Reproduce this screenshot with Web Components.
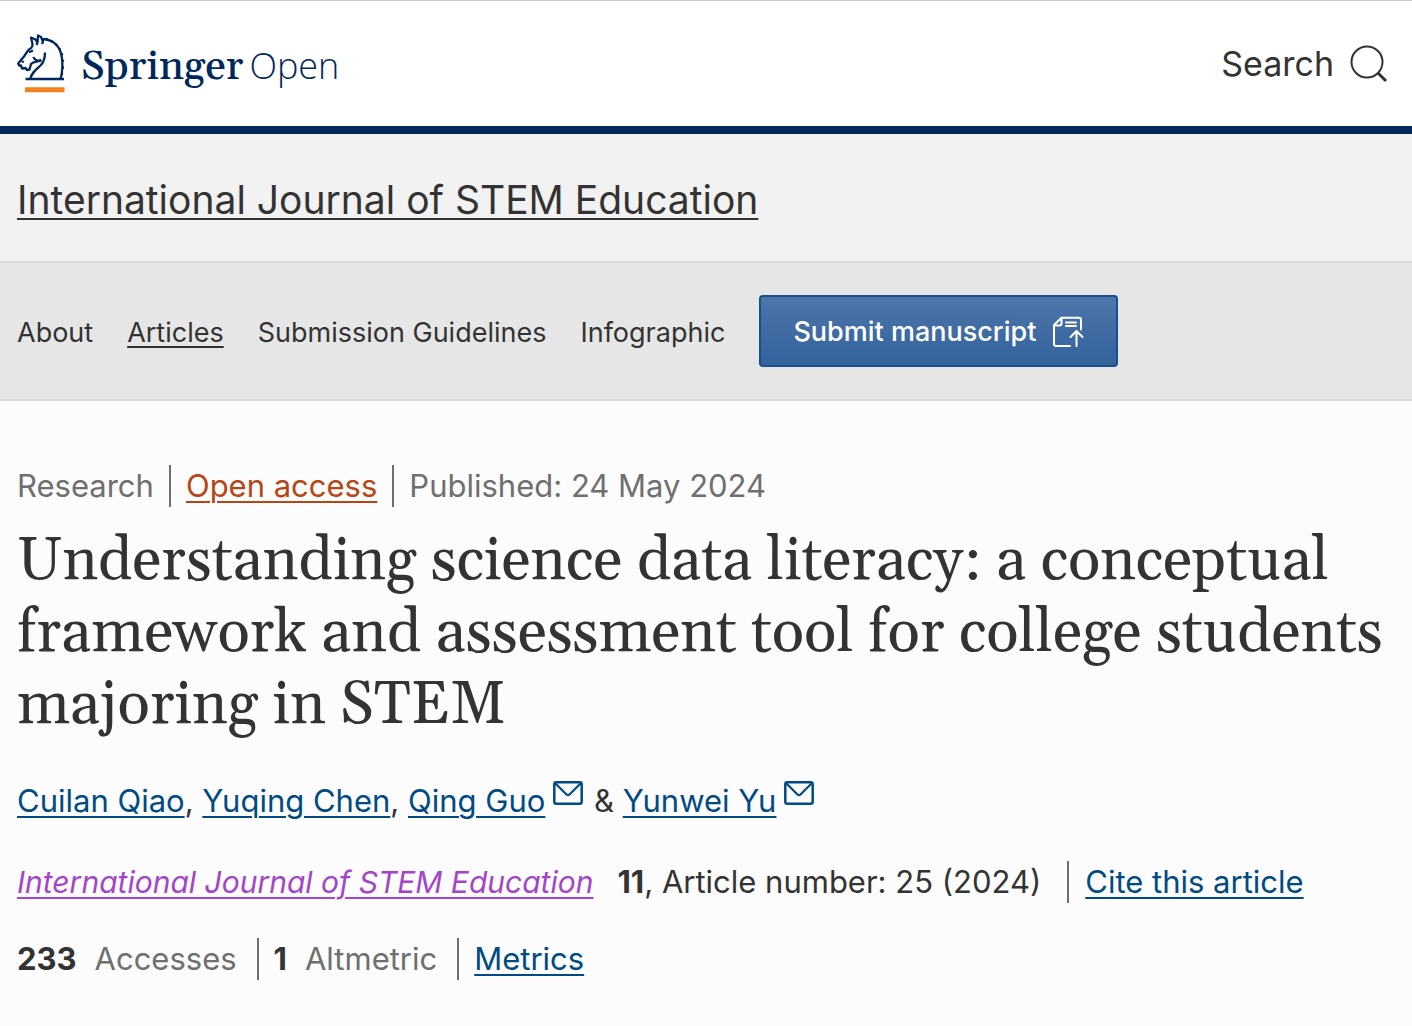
<!DOCTYPE html>
<html lang="en">
<head>
<meta charset="utf-8">
<meta name="viewport" content="width=device-width, initial-scale=1">
<title>Understanding science data literacy</title>
<style>
  body { margin: 0; background: #fcfcfc; color: #333; font-family: Inter, "Liberation Sans", sans-serif; }
</style>
</head>
<body>
<site-header></site-header>
<journal-banner>International Journal of STEM Education</journal-banner>
<journal-nav></journal-nav>
<article-header>
  <span slot="title">Understanding science data literacy: a conceptual framework and assessment tool for college students majoring in STEM</span>
</article-header>

<script>
class BaseElement extends HTMLElement {
  connectedCallback() {
    if (this.shadowRoot) return;
    this.attachShadow({ mode: "open" }).innerHTML = this.constructor.markup;
  }
}

customElements.define("springer-logo", class extends BaseElement {
  static markup = `
    <style>
      :host { display: block; }
      a { display: flex; align-items: center; color: #01285c; text-decoration: none; line-height: 64px; }
      svg { display: block; flex: none; margin-right: 16px; }
      .name { display: flex; align-items: baseline; gap: 6px; padding-top: 6px; }
      .springer { font: 500 41px/64px Georgia, Gelasio, "Liberation Serif", serif; }
      .open { font: 300 36px/64px "Open Sans", sans-serif; }
    </style>
    <a href="#" aria-label="SpringerOpen">
      <svg width="48" height="60" viewBox="0 0 48 60" fill="none" stroke="#01285c" stroke-width="2.300" stroke-linejoin="round">
        <path d="M15 13.5C11 15 9.500 19 7 22.500L1.200 29.500L2.300 31.700L4 31.500L5 34.500L8.500 34L10 36L12.500 35.500L14 30C17 26.500 21 28.500 24.500 26"/>
        <path d="M15 13.500L15.500 10L14 3.500L18.500 5.500L20.500 8.500L21 1.500L24 3L26 7.500L25 10M20.500 8.500L19.500 11M25 5C38 5.500 44 14 45 25C45.800 32 45.500 38 43.500 45"/>
        <path d="M28 18.500C28 25 27 28 23.500 31.500C18.500 36 14.500 39 13.300 45M16.500 23C17.500 26 20 27 24 26.500"/>
        <path d="M12 18.200L16 16.500M5 28.500L6.500 27"/>
        <path d="M29 4.500l1.500 1M34 6.500l1.500 1.300M38.500 10l1.500 1.300M42 14.500l1.500 1M44.500 20l1.500 .8M45.500 26.500l1.500 .5M45.700 33.500h1.300M44.700 40l1.300 .4"/>
        <path d="M8.500 45H47"/>
        <path d="M8 55.800H47.500" stroke="#f58220" stroke-width="5"/>
      </svg>
      <span class="name"><span class="springer">Springer</span><span class="open">Open</span></span>
    </a>`;
});

customElements.define("site-header", class extends BaseElement {
  static markup = `
    <style>
      :host { display: flex; align-items: center; justify-content: space-between; background: #fff;
        border-top: 1px solid #ccc; border-bottom: 8px solid #01285c; padding: 27px 24px 27px 17px; }
      button { display: flex; align-items: center; gap: 16px; padding: 0; border: 0; background: none; color: #333;
        font: 400 34px/48px Inter, "Liberation Sans", sans-serif; }
      svg { display: block; }
    </style>
    <springer-logo></springer-logo>
    <button type="button">Search
      <svg width="38" height="38" viewBox="0 0 38 38" fill="none" stroke="#333">
        <circle cx="17" cy="17" r="15.500" stroke-width="2"/>
        <path d="M28 28L36 36" stroke-width="3"/>
      </svg>
    </button>`;
});

customElements.define("journal-banner", class extends BaseElement {
  static markup = `
    <style>
      :host { display: block; background: #f2f2f2; border-bottom: 2px solid #d9d9d9; padding: 38px 17px 33px; }
      a { display: inline-block; color: #333; font-size: 39px; line-height: 56px; text-decoration-thickness: 2px; text-underline-offset: 4px; }
    </style>
    <a href="#"><slot></slot></a>`;
});

customElements.define("submit-button", class extends BaseElement {
  static markup = `
    <style>
      :host { display: block; }
      a { display: flex; align-items: center; gap: 16px; box-sizing: border-box; padding: 11px 32px 9px; border: 2px solid #1a4f8f;
        border-radius: 4px; background: linear-gradient(#4d76a9, #33629d); color: #fff; font-size: 27px; line-height: 48px;
        font-weight: 500; text-decoration: none; white-space: nowrap; }
      svg { display: block; }
    </style>
    <a href="#"><slot></slot>
      <svg width="32" height="32" viewBox="0 0 32 32" fill="none" stroke="#fff" stroke-width="2" stroke-linecap="round" stroke-linejoin="round">
        <path d="M18 30H4Q2 30 2 28V9L9.500 1.800H27Q29 1.800 29 4V13.500M2.500 9.500H7.500Q9.500 9.500 9.500 7.500V2.500M14 6.500H24M14 10H24M24.500 30V15.500M18.500 21L24.500 15L30.500 21"/>
      </svg>
    </a>`;
});

customElements.define("journal-nav", class extends BaseElement {
  static markup = `
    <style>
      :host { display: block; background: #e6e6e6; border-bottom: 2px solid #d9d9d9; padding: 32px 17px; }
      nav { display: flex; flex-wrap: wrap; align-items: center; gap: 34px; }
      nav > a { padding-top: 4px; color: #333; font-size: 27px; line-height: 40px; text-decoration: none; white-space: nowrap; }
      nav > a[aria-current] { text-decoration: underline 2px; text-underline-offset: 4px; }
    </style>
    <nav aria-label="Journal">
      <a href="#">About</a>
      <a href="#" aria-current="page">Articles</a>
      <a href="#">Submission Guidelines</a>
      <a href="#">Infographic</a>
      <submit-button>Submit manuscript</submit-button>
    </nav>`;
});

customElements.define("mail-icon", class extends BaseElement {
  static markup = `
    <style>
      :host { display: inline-block; width: 30px; height: 24px; margin: 0 2px 0 8px; vertical-align: 7px; }
      svg { display: block; }
    </style>
    <svg width="30" height="24" viewBox="0 0 30 24" fill="none" stroke="#004b83" stroke-width="2.500" stroke-linejoin="round">
      <rect x="1.300" y="1.300" width="27.400" height="21.400" rx="2"/>
      <path d="M2.500 2.500L13.500 13.500Q15 15 16.500 13.500L27.500 2.500" stroke-width="2.200"/>
    </svg>`;
});

customElements.define("article-header", class extends BaseElement {
  static markup = `
    <style>
      :host { display: block; padding: 64px 17px 48px; font-size: 31px; line-height: 42px; }
      a { color: #004b83; text-decoration-thickness: 2px; text-underline-offset: 4px; }
      ul { display: flex; flex-wrap: wrap; margin: 0; padding: 0; list-style: none; color: #6f6f6f; }
      li + li { border-left: 2px solid #6f6f6f; margin-left: 15px; padding-left: 15px; }
      .open { color: #b74616; }
      h1 { margin: 19px 0 0; color: #333; font: 400 60px/72px Georgia, Gelasio, "Liberation Serif", serif; }
      p { margin: 0; }
      .authors { margin-top: 38px; }
      .journal { display: flex; flex-wrap: wrap; align-items: baseline; margin-top: 39px; }
      .journal .title { color: #a345c9; font-size: 30px; font-style: italic; margin-right: 24px; }
      .cite { border-left: 2px solid #6f6f6f; margin-left: 26px; padding-left: 16px; }
      .metrics { margin-top: 35px; }
      .metrics li + li { margin-left: 20px; }
      .metrics b { color: #333; margin-right: 18px; }
    </style>
    <ul>
      <li>Research</li>
      <li><a class="open" href="#">Open access</a></li>
      <li>Published: <time datetime="2024-05-24">24 May 2024</time></li>
    </ul>
    <h1><slot name="title"></slot></h1>
    <p class="authors"><a href="#">Cuilan Qiao</a>, <a href="#">Yuqing Chen</a>, <a href="#">Qing Guo</a><mail-icon></mail-icon> &amp; <a href="#">Yunwei Yu</a><mail-icon></mail-icon></p>
    <p class="journal"><a class="title" href="#">International Journal of STEM Education</a><span><b>11</b>, Article number: 25 (2024)</span><span class="cite"><a href="#">Cite this article</a></span></p>
    <ul class="metrics">
      <li><b>233</b>Accesses</li>
      <li><b>1</b>Altmetric</li>
      <li><a href="#">Metrics</a></li>
    </ul>`;
});
</script>
</body>
</html>
